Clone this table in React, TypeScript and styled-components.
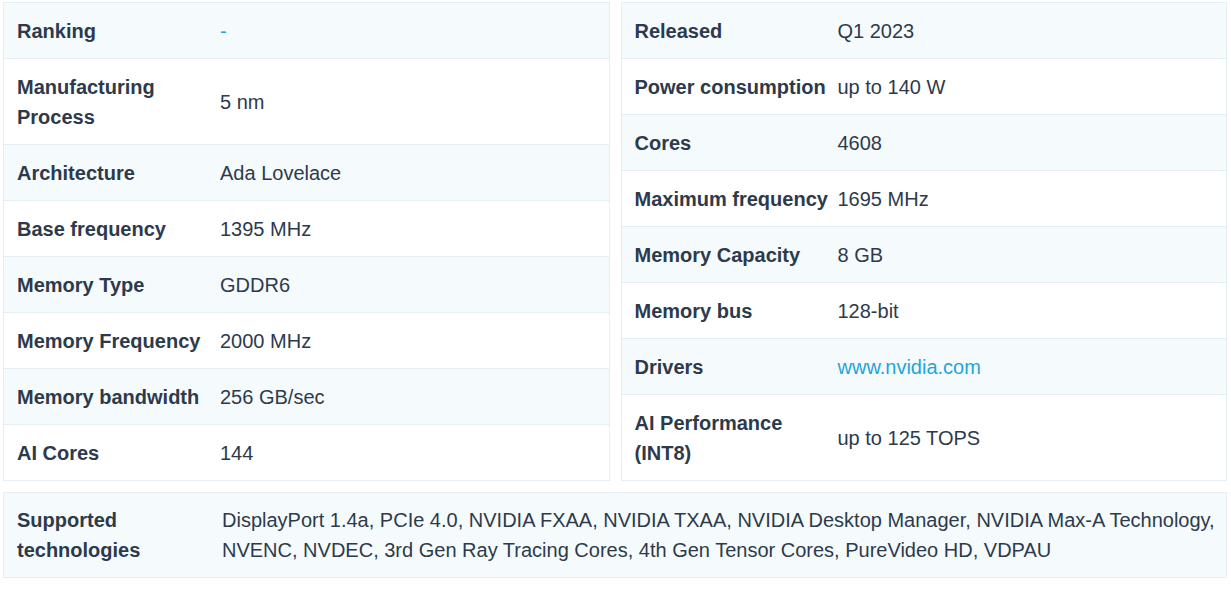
import React from 'react';
import styled, { createGlobalStyle } from 'styled-components';

const GlobalStyle = createGlobalStyle`
  body {
    margin: 0;
    background: #ffffff;
    font-family: "Liberation Sans", Arial, sans-serif;
    color: #2d3a4b;
  }
`;

const Page = styled.div`
  padding: 2px 4px 0 3px;
  display: flex;
  flex-direction: column;
  gap: 11px;
`;

const Columns = styled.div`
  display: grid;
  grid-template-columns: 1fr 1fr;
  gap: 11px;
`;

const Table = styled.div`
  border: 1px solid #e5eef3;
  display: flex;
  flex-direction: column;
`;

const Row = styled.div<{ $shade: boolean; $labelWidth?: number }>`
  display: grid;
  grid-template-columns: ${(p) => p.$labelWidth ?? 216}px 1fr;
  align-items: center;
  background: ${(p) => (p.$shade ? '#f5fafd' : '#ffffff')};
  font-size: 20px;
  line-height: 30px;

  & + & {
    border-top: 1px solid #e5eef3;
  }
`;

const Label = styled.div<{ $pad?: number }>`
  font-weight: bold;
  padding: ${(p) => p.$pad ?? 12.5}px 6px ${(p) => p.$pad ?? 12.5}px 13px;
`;

const Value = styled.div<{ $pad?: number }>`
  padding: ${(p) => p.$pad ?? 12.5}px 4px ${(p) => p.$pad ?? 12.5}px 0;
`;

const Link = styled.a`
  color: #1ea5dc;
  text-decoration: none;
`;

type Spec = { label: string; value: React.ReactNode };

const left: Spec[] = [
  { label: 'Ranking', value: <Link href="#">-</Link> },
  { label: 'Manufacturing Process', value: '5 nm' },
  { label: 'Architecture', value: 'Ada Lovelace' },
  { label: 'Base frequency', value: '1395 MHz' },
  { label: 'Memory Type', value: 'GDDR6' },
  { label: 'Memory Frequency', value: '2000 MHz' },
  { label: 'Memory bandwidth', value: '256 GB/sec' },
  { label: 'AI Cores', value: '144' },
];

const right: Spec[] = [
  { label: 'Released', value: 'Q1 2023' },
  { label: 'Power consumption', value: 'up to 140 W' },
  { label: 'Cores', value: '4608' },
  { label: 'Maximum frequency', value: '1695 MHz' },
  { label: 'Memory Capacity', value: '8 GB' },
  { label: 'Memory bus', value: '128-bit' },
  { label: 'Drivers', value: <Link href="#">www.nvidia.com</Link> },
  { label: 'AI Performance (INT8)', value: 'up to 125 TOPS' },
];

function SpecTable({ rows }: { rows: Spec[] }) {
  return (
    <Table>
      {rows.map((r, i) => (
        <Row key={r.label} $shade={i % 2 === 0}>
          <Label>{r.label}</Label>
          <Value>{r.value}</Value>
        </Row>
      ))}
    </Table>
  );
}

export default function App() {
  return (
    <>
      <GlobalStyle />
      <Page>
        <Columns>
          <SpecTable rows={left} />
          <SpecTable rows={right} />
        </Columns>
        <Table>
          <Row $shade $labelWidth={218}>
            <Label $pad={12}>Supported technologies</Label>
            <Value $pad={12}>
              DisplayPort 1.4a, PCIe 4.0, NVIDIA FXAA, NVIDIA TXAA, NVIDIA Desktop Manager, NVIDIA Max-A
              Technology, NVENC, NVDEC, 3rd Gen Ray Tracing Cores, 4th Gen Tensor Cores, PureVideo HD, VDPAU
            </Value>
          </Row>
        </Table>
      </Page>
    </>
  );
}
